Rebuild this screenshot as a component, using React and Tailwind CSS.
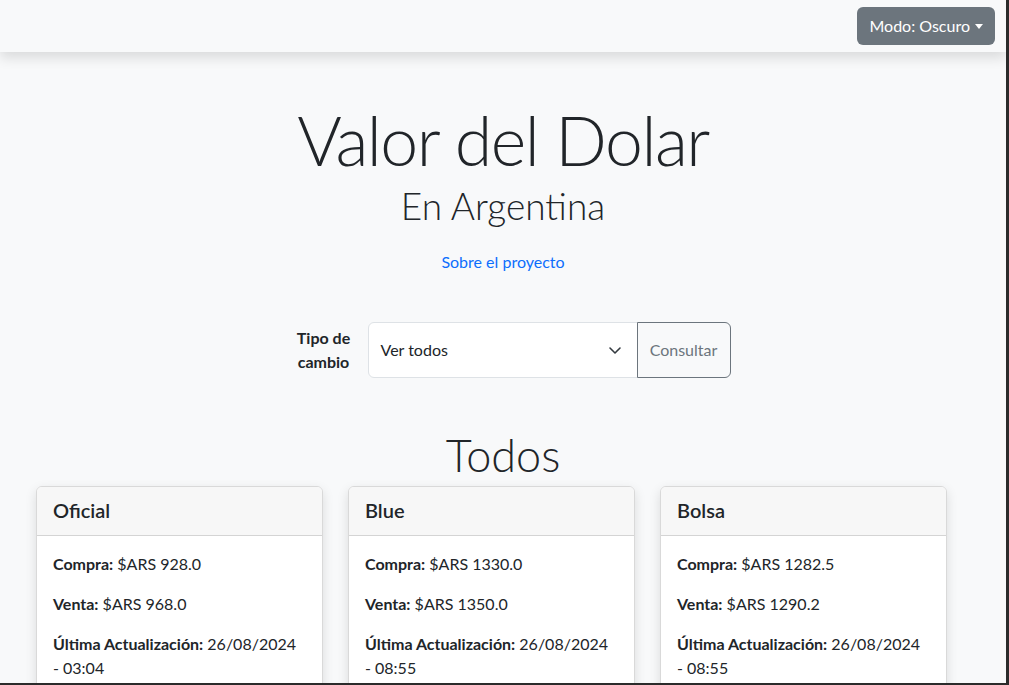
import React from "react";

const cards = [
  { title: "Oficial", compra: "928.0", venta: "968.0", fecha: "26/08/2024", hora: "03:04" },
  { title: "Blue", compra: "1330.0", venta: "1350.0", fecha: "26/08/2024", hora: "08:55" },
  { title: "Bolsa", compra: "1282.5", venta: "1290.2", fecha: "26/08/2024", hora: "08:55" },
];

const DolarCard = ({ title, compra, venta, fecha, hora }) => {
  return (
    <div className="w-[287px] bg-white border border-[#d9d9d9] rounded-[6px] shadow-[0_4px_12px_rgba(0,0,0,0.12)] overflow-hidden">
      <div className="h-[49px] bg-[#f7f7f7] border-b border-[#d4d4d4] px-4 flex items-center">
        <h5 className="text-[20px] font-semibold text-[#212529] mt-[-3px]">{title}</h5>
      </div>
      <div className="px-4 pt-4 text-[16px] leading-6 text-[#212529]">
        <p className="mb-4">
          <b className="font-bold">Compra:</b> $ARS {compra}
        </p>
        <p className="mb-4">
          <b className="font-bold">Venta:</b> $ARS {venta}
        </p>
        <p className="pb-4">
          <b className="font-bold">Última Actualización:</b> {fecha} - {hora}
        </p>
      </div>
    </div>
  );
};

const App = () => {
  return (
    <div className="relative h-[685px] overflow-hidden bg-[#f8f9fa] font-['Lato',sans-serif] border-r-[3px] border-b-2 border-[#2b2b2b]">
      <nav className="h-[52px] bg-[#f8f9fa] shadow-[0_6px_12px_rgba(0,0,0,0.12)] flex items-center justify-end pr-[11px] relative z-10">
        <button className="h-[38px] px-3 rounded-[6px] bg-[#6c757d] text-white text-[16px] flex items-center gap-[5px]">
          Modo: Oscuro
          <span className="w-0 h-0 border-l-[4px] border-r-[4px] border-t-[5px] border-l-transparent border-r-transparent border-t-white mt-[1px]"></span>
        </button>
      </nav>

      <main className="flex flex-col items-center">
        <h1 className="mt-[46px] text-[68px] leading-[84px] font-light text-[#212529] tracking-[-1.5px]">
          Valor del Dolar
        </h1>
        <h2 className="mt-[2px] text-[37px] leading-[44px] font-light text-[#212529]">En Argentina</h2>
        <a href="#" className="mt-[22px] text-[16px] leading-6 text-[#0d6efd]">
          Sobre el proyecto
        </a>

        <form className="mt-[48px] flex items-center ml-[16px]">
          <label className="w-[64px] text-[16px] leading-6 font-bold text-[#212529] text-center mr-[12px]">
            Tipo de cambio
          </label>
          <div className="flex h-[56px]">
            <div className="w-[270px] bg-white border border-[#dee2e6] rounded-l-[6px] flex items-center justify-between pl-3 pr-[14px] text-[16px] text-[#212529]">
              <span>Ver todos</span>
              <svg width="16" height="16" viewBox="0 0 16 16" fill="none">
                <path d="M3 6l5 5 5-5" stroke="#343a40" strokeWidth="1.6" strokeLinecap="round" strokeLinejoin="round" />
              </svg>
            </div>
            <button type="button" className="w-[94px] border border-[#6c757d] rounded-r-[6px] text-[#6c757d] text-[16px] bg-[#f8f9fa] ml-[-1px]">
              Consultar
            </button>
          </div>
        </form>

        <h3 className="mt-[49px] text-[45px] leading-[56px] font-light text-[#212529]">Todos</h3>
      </main>

      <div className="flex gap-[25px] pl-[36px] mt-[3px]">
        {cards.map((c) => (
          <DolarCard key={c.title} {...c} />
        ))}
      </div>
    </div>
  );
};

export default App;
